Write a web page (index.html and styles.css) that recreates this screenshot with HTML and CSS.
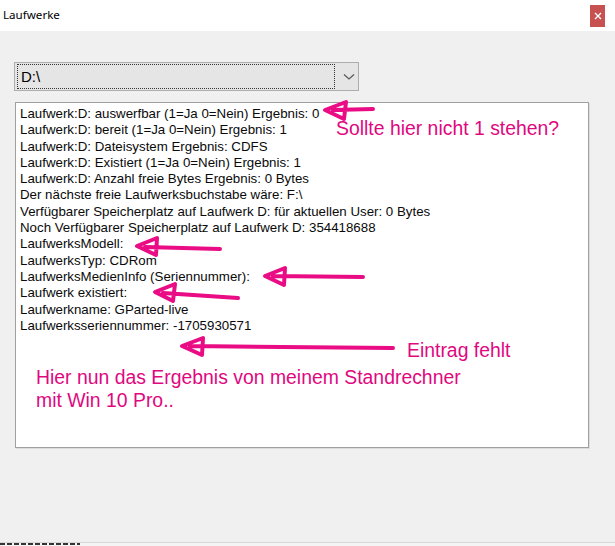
FILE: index.html
```html
<!DOCTYPE html>
<html lang="de">
<head>
<meta charset="utf-8">
<title>Laufwerke</title>
<link rel="stylesheet" href="styles.css">
</head>
<body>
<div class="window">
  <div class="titlebar">
    <span class="title">Laufwerke</span>
    <span class="close"><svg width="8" height="8" viewBox="0 0 8 8"><path d="M1 1 L7 7 M7 1 L1 7" stroke="#fff" stroke-width="1.4"/></svg></span>
  </div>
  <div class="content">
    <div class="combo">
      <div class="combo-value"><span>D:\</span></div>
      <svg class="chevron" width="12" height="8" viewBox="0 0 12 8"><path d="M1 1.5 L6 6 L11 1.5" fill="none" stroke="#5a5a5a" stroke-width="1.3"/></svg>
    </div>
    <div class="listbox">
      <div>Laufwerk:D: auswerfbar (1=Ja 0=Nein) Ergebnis: 0</div>
      <div>Laufwerk:D: bereit (1=Ja 0=Nein) Ergebnis: 1</div>
      <div>Laufwerk:D: Dateisystem Ergebnis: CDFS</div>
      <div>Laufwerk:D: Existiert (1=Ja 0=Nein) Ergebnis: 1</div>
      <div>Laufwerk:D: Anzahl freie Bytes Ergebnis: 0 Bytes</div>
      <div>Der nächste freie Laufwerksbuchstabe wäre: F:\</div>
      <div>Verfügbarer Speicherplatz auf Laufwerk D: für aktuellen User: 0 Bytes</div>
      <div>Noch Verfügbarer Speicherplatz auf Laufwerk D: 354418688</div>
      <div>LaufwerksModell:</div>
      <div>LaufwerksTyp: CDRom</div>
      <div>LaufwerksMedienInfo (Seriennummer):</div>
      <div>Laufwerk existiert:</div>
      <div>Laufwerkname: GParted-live</div>
      <div>Laufwerksseriennummer: -1705930571</div>
    </div>
  </div>
  <div class="footer"><span class="footer-ink"></span></div>
</div>

<div class="annotations">
  <svg class="arrows" width="615" height="546" viewBox="0 0 615 546">
    <g fill="none" stroke="#ea0c84" stroke-width="4" stroke-linecap="round" stroke-linejoin="round">
      <path d="M325 110 L346 102 L344 119 Z M333 110 L373 109"/>
      <path d="M137 246 L157 238 L156 255 Z M145 247 L220 249"/>
      <path d="M265 276 L285 268 L284 285 Z M273 276 L363 277"/>
      <path d="M155 292 L175 284 L173 301 Z M163 293 L238 298"/>
      <path d="M182 346 L203 338 L202 355 Z M190 346 L393 348"/>
    </g>
  </svg>
  <div class="note note-q">Sollte hier nicht 1 stehen?</div>
  <div class="note note-missing">Eintrag fehlt</div>
  <div class="note note-result">Hier nun das Ergebnis von meinem Standrechner<br>mit Win 10 Pro..</div>
</div>
</body>
</html>
```
FILE: styles.css
```css
html, body {
  margin: 0;
  padding: 0;
}
body {
  width: 615px;
  height: 546px;
  overflow: hidden;
  position: relative;
  background: #f0f0f0;
  font-family: "Liberation Sans", Arial, sans-serif;
  color: #000;
}
.window {
  display: flex;
  flex-direction: column;
  height: 546px;
}
.titlebar {
  height: 31px;
  background: #ffffff;
  display: flex;
  justify-content: space-between;
  align-items: flex-start;
  flex: none;
}
.title {
  font-family: "Noto Sans", "Open Sans", sans-serif;
  font-size: 11.6px;
  line-height: 16px;
  margin: 7px 0 0 3px;
  color: #000;
}
.close {
  width: 15px;
  height: 22px;
  margin: 5px 10px 0 0;
  background: #c75050;
  display: flex;
  align-items: center;
  justify-content: center;
}
.content {
  flex: 1;
  padding: 31px 0 0 14px;
}
.combo {
  box-sizing: border-box;
  width: 345px;
  height: 29px;
  border: 1px solid #adadad;
  background: #e5e5e5;
  display: flex;
  align-items: center;
  padding: 2px;
}
.combo-value {
  box-sizing: border-box;
  width: 318px;
  height: 25px;
  border: 1px dotted #333;
  display: flex;
  align-items: center;
  padding-left: 3px;
  font-size: 15px;
}
.chevron {
  margin-left: 8px;
}
.listbox {
  box-sizing: border-box;
  margin: 11px 0 0 1px;
  width: 574px;
  height: 346px;
  background: #fff;
  border: 1px solid #a0a0a0;
  box-shadow: 1px 1px 0 #dcdcdc;
  padding: 3px 0 0 4px;
  font-size: 13.3px;
  line-height: 16.3px;
  color: #0a0a0a;
}
.footer {
  flex: none;
  height: 3px;
  border-top: 1px solid #d8d8d8;
  background: #f4f4f4;
  display: flex;
}
.footer-ink {
  width: 80px;
  height: 2px;
  background: repeating-linear-gradient(90deg, #333 0 5px, #f4f4f4 5px 7px);
}
.annotations {
  position: absolute;
  left: 0;
  top: 0;
  width: 615px;
  height: 546px;
  pointer-events: none;
}
.arrows {
  position: absolute;
  left: 0;
  top: 0;
}
.note {
  position: absolute;
  color: #e0087f;
  font-family: "Liberation Sans", Arial, sans-serif;
  font-size: 19.4px;
  line-height: 22px;
  white-space: nowrap;
}
.note-q {
  left: 336px;
  top: 117px;
}
.note-missing {
  left: 407px;
  top: 339px;
}
.note-result {
  left: 36px;
  top: 366px;
  line-height: 23px;
}
```
